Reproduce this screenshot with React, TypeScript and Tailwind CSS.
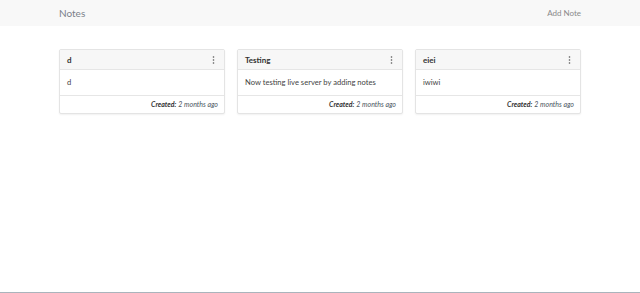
import React from "react";

const notes = [
  { title: "d", body: "d" },
  { title: "Testing", body: "Now testing live server by adding notes" },
  { title: "eiei", body: "iwiwi" },
];

function Kebab() {
  return (
    <svg width="3" height="8" viewBox="0 0 3 8" className="block">
      <circle cx="1.5" cy="1" r="0.8" fill="#555" />
      <circle cx="1.5" cy="4" r="0.8" fill="#555" />
      <circle cx="1.5" cy="7" r="0.8" fill="#555" />
    </svg>
  );
}

export default function App() {
  return (
    <div
      className="flex h-[293px] flex-col bg-white text-[#333]"
      style={{ fontFamily: "Lato, 'Open Sans', sans-serif" }}
    >
      <nav className="flex h-[26px] items-center justify-between bg-[#f8f8f8] pl-[59px] pr-[59px]">
        <span className="text-[10px] text-[#7a8089]">Notes</span>
        <span className="text-[8px] text-[#8a8a8a]">Add Note</span>
      </nav>
      <div className="flex-1 px-[59px] pt-[23px]">
        <div className="grid grid-cols-3 gap-[12px]">
          {notes.map((n) => (
            <div
              key={n.title}
              className="rounded-[2px] border border-[#e4e4e4] bg-white shadow-[0_1px_2px_rgba(0,0,0,0.06)]"
            >
              <div className="flex h-[20px] items-center justify-between border-b border-[#e6e6e6] bg-[#f7f7f7] pl-[7px] pr-[9px]">
                <span className="text-[8px] font-bold text-[#333]">{n.title}</span>
                <Kebab />
              </div>
              <div className="flex h-[26px] items-center border-b border-[#e6e6e6] pl-[7px] text-[7.6px] text-[#444]">
                {n.body}
              </div>
              <div className="flex h-[17px] items-center justify-end pr-[6px] text-[7px] italic text-[#555]">
                <span className="font-bold text-[#333]">Created:</span>
                <span className="ml-[2px] text-[#4a5560]">2 months ago</span>
              </div>
            </div>
          ))}
        </div>
      </div>
      <div className="h-[1px] bg-[#aab4bc]" />
    </div>
  );
}
